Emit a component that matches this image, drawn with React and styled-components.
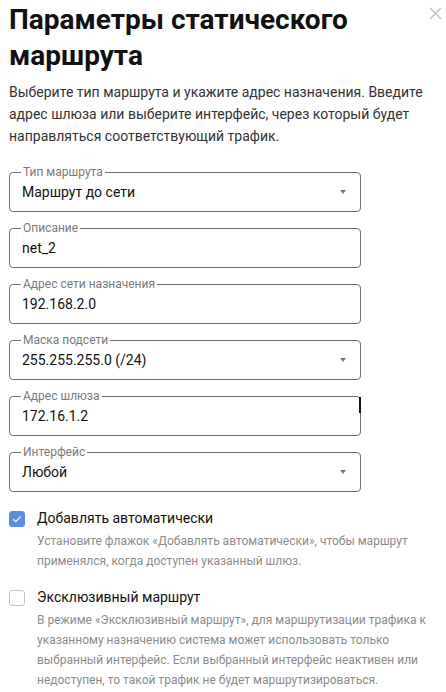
import styled, { createGlobalStyle } from 'styled-components'

const Global = createGlobalStyle`
  body {
    margin: 0;
    background: #fff;
    font-family: Roboto, "Noto Sans", sans-serif;
  }
`

const Dialog = styled.div`
  position: relative;
  width: 446px;
  box-sizing: border-box;
  padding: 2px 12px 16px 9px;
`

const Close = styled.button`
  position: absolute;
  top: 5px;
  right: 3px;
  width: 16px;
  height: 16px;
  padding: 0;
  border: 0;
  background: none;
  display: flex;
  align-items: center;
  justify-content: center;
  cursor: pointer;
`

const Title = styled.h1`
  margin: 0;
  font-size: 28px;
  line-height: 36px;
  font-weight: 700;
  color: #111;
  padding-right: 20px;
`

const Intro = styled.p`
  margin: 7px 0 0;
  font-size: 14px;
  line-height: 22px;
  color: #333;
`

const Fields = styled.div`
  display: flex;
  flex-direction: column;
  gap: 16px;
  margin-top: 25px;
  width: 352px;
`

const Field = styled.div`
  position: relative;
  height: 40px;
  box-sizing: border-box;
  border: 1px solid #717171;
  border-radius: 4px;
  display: flex;
  align-items: center;
  padding: 0 12px 0 12px;

  ${({ $caret }) =>
    $caret &&
    `&::after {
      content: '';
      position: absolute;
      right: -1px;
      top: 0;
      width: 2px;
      height: 16px;
      background: #111;
    }`}
`

const Legend = styled.span`
  position: absolute;
  left: 11px;
  top: -8px;
  padding: 0 2px;
  background: #fff;
  font-size: 12px;
  line-height: 14px;
  color: #7a7a7a;
`

const Value = styled.span`
  flex: 1;
  font-size: 14px;
  color: #111;
`

const Arrow = styled.span`
  width: 0;
  height: 0;
  border-left: 3.5px solid transparent;
  border-right: 3.5px solid transparent;
  border-top: 4px solid #777;
  margin-right: 2px;
`

const Checks = styled.div`
  display: flex;
  flex-direction: column;
  gap: 16px;
  margin-top: 16px;
`

const CheckRow = styled.label`
  display: grid;
  grid-template-columns: 16px 1fr;
  column-gap: 12px;
`

const Box = styled.span`
  width: 16px;
  height: 16px;
  box-sizing: border-box;
  margin-top: 3px;
  border-radius: 3px;
  border: 1px solid ${({ $on }) => ($on ? '#5a8fdd' : '#c4c4c4')};
  background: ${({ $on }) => ($on ? '#5a8fdd' : '#fff')};
  display: flex;
  align-items: center;
  justify-content: center;
`

const CheckText = styled.div`
  display: flex;
  flex-direction: column;
  gap: 3px;
`

const CheckLabel = styled.span`
  font-size: 14px;
  line-height: 20px;
  color: #111;
`

const Hint = styled.span`
  font-size: 12px;
  line-height: 20px;
  color: #8c8c8c;
`

const fields = [
  { label: 'Тип маршрута', value: 'Маршрут до сети', select: true },
  { label: 'Описание', value: 'net_2' },
  { label: 'Адрес сети назначения', value: '192.168.2.0' },
  { label: 'Маска подсети', value: '255.255.255.0 (/24)', select: true },
  { label: 'Адрес шлюза', value: '172.16.1.2', caret: true },
  { label: 'Интерфейс', value: 'Любой', select: true },
]

function Check({ on, label, hint }) {
  return (
    <CheckRow>
      <Box $on={on}>
        {on && (
          <svg width="10" height="8" viewBox="0 0 10 8">
            <path d="M1.2 4.2 L3.8 6.6 L8.8 1.4" fill="none" stroke="#fff" strokeWidth="1.2" />
          </svg>
        )}
      </Box>
      <CheckText>
        <CheckLabel>{label}</CheckLabel>
        <Hint>{hint}</Hint>
      </CheckText>
    </CheckRow>
  )
}

export default function App() {
  return (
    <Dialog>
      <Global />
      <Close aria-label="Закрыть">
        <svg width="13" height="13" viewBox="0 0 13 13">
          <path d="M1 1 L12 12 M12 1 L1 12" stroke="#bdbdbd" strokeWidth="1.4" />
        </svg>
      </Close>
      <Title>Параметры статического маршрута</Title>
      <Intro>
        Выберите тип маршрута и укажите адрес назначения. Введите адрес шлюза или выберите
        интерфейс, через который будет направляться соответствующий трафик.
      </Intro>

      <Fields>
        {fields.map((f) => (
          <Field key={f.label} $caret={f.caret}>
            <Legend>{f.label}</Legend>
            <Value>{f.value}</Value>
            {f.select && <Arrow />}
          </Field>
        ))}
      </Fields>

      <Checks>
        <Check
          on
          label="Добавлять автоматически"
          hint="Установите флажок «Добавлять автоматически», чтобы маршрут применялся, когда доступен указанный шлюз."
        />
        <Check
          label="Эксклюзивный маршрут"
          hint="В режиме «Эксклюзивный маршрут», для маршрутизации трафика к указанному назначению система может использовать только выбранный интерфейс. Если выбранный интерфейс неактивен или недоступен, то такой трафик не будет маршрутизироваться."
        />
      </Checks>
    </Dialog>
  )
}
